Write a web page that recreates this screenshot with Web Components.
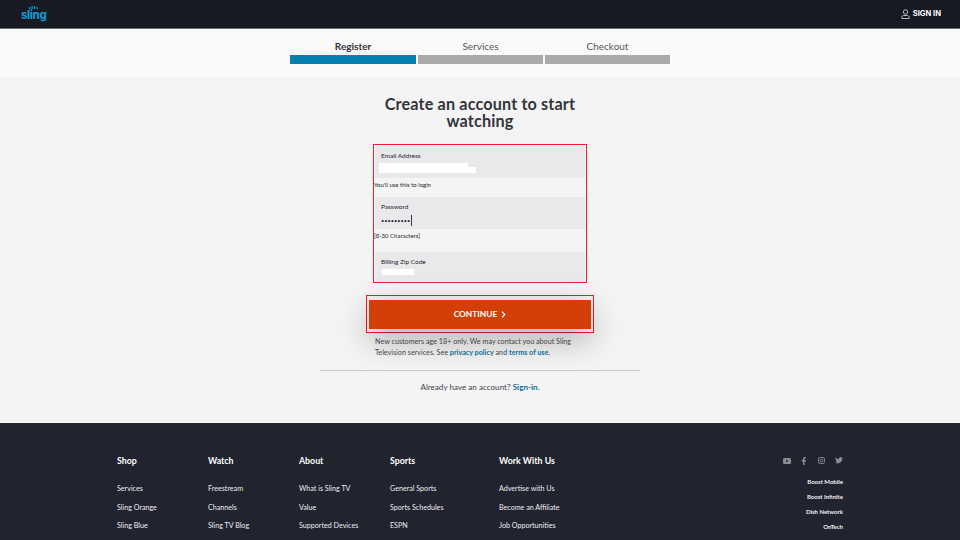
<!DOCTYPE html>
<html lang="en">
<head>
<meta charset="utf-8">
<title>Sling - Register</title>
<style>
  html, body { margin: 0; height: 540px; overflow: hidden; background: #f4f4f4; }
  body { font-family: "Lato", "Liberation Sans", sans-serif; color: #33343a; }
</style>
</head>
<body>
<sling-header></sling-header>
<sling-steps></sling-steps>
<sling-signup></sling-signup>
<sling-footer></sling-footer>

<script>
class SlingHeader extends HTMLElement {
  connectedCallback() {
    this.attachShadow({ mode: 'open' });
    this.shadowRoot.innerHTML = `
      <style>
        :host { display: flex; justify-content: space-between; align-items: center; box-sizing: border-box; height: 29px; padding: 0 19px 0 21px; background: #171923; border-bottom: 1px solid #6d6d75; }
        .logo { position: relative; font: 700 11.5px/12px "Inter", sans-serif; letter-spacing: -.35px; color: #0f9fdc; padding-top: 2px; }
        .logo svg { position: absolute; left: 8px; top: -1px; }
        .signin { display: flex; align-items: center; gap: 3px; font: 700 7.6px/10px "Inter", sans-serif; color: #fff; }
      </style>
      <div class="logo">
        <svg width="9" height="3" viewBox="0 0 9 3" fill="#0f9fdc"><rect x="0" y="1" width="1.2" height="2"/><rect x="2.5" y="0" width="1.2" height="3"/><rect x="5" y="0" width="1.2" height="3"/><rect x="7.5" y="1" width="1.2" height="2"/></svg>
        sling
      </div>
      <div class="signin">
        <svg width="9" height="10" viewBox="0 0 9 10" fill="none" stroke="#b8b8bc" stroke-width="1"><circle cx="4.5" cy="3" r="2.2"/><path d="M.8 9.5V8.2c0-1 .9-1.7 2-1.7h3.4c1.1 0 2 .7 2 1.7v1.3z"/></svg>
        <span>SIGN IN</span>
      </div>
    `;
  }
}

class SlingSteps extends HTMLElement {
  connectedCallback() {
    this.attachShadow({ mode: 'open' });
    const steps = [['Register', true, 126], ['Services', false, 125], ['Checkout', false, 125]];
    this.shadowRoot.innerHTML = `
      <style>
        :host { display: flex; justify-content: center; gap: 2px; box-sizing: border-box; height: 48px; padding-top: 11px; background: #fafafa; }
        .step { text-align: center; font-size: 10px; line-height: 13px; color: #55565c; }
        .step.on { color: #33343a; font-weight: 700; }
        .bar { height: 9px; margin-top: 2px; background: #aaaaaa; }
        .on .bar { background: #0480ae; }
      </style>
      ${steps.map(s => `<div class="step ${s[1] ? 'on' : ''}" style="width:${s[2]}px">${s[0]}<div class="bar"></div></div>`).join('')}
    `;
  }
}

class SlingField extends HTMLElement {
  connectedCallback() {
    this.attachShadow({ mode: 'open' });
    this.shadowRoot.innerHTML = `
      <style>
        :host { display: block; }
        .box { box-sizing: border-box; height: var(--h, 32px); padding: 6px 6px 0; background: #e9e9eb; }
        label { display: block; font-size: 6.5px; line-height: 8px; color: #26272c; }
        .val { display: block; margin-top: 3px; height: 12px; }
        .help { box-sizing: border-box; height: var(--help-h, 19px); padding-top: 3px; margin-left: -1px; font-size: 6px; line-height: 8px; color: #26272c; }
      </style>
      <div class="box">
        <label>${this.getAttribute('label')}</label>
        <div class="val"><slot></slot></div>
      </div>
      ${this.getAttribute('help') ? `<div class="help">${this.getAttribute('help')}</div>` : ''}
    `;
  }
}

class SlingSignup extends HTMLElement {
  connectedCallback() {
    this.attachShadow({ mode: 'open' });
    this.shadowRoot.innerHTML = `
      <style>
        :host { display: flex; flex-direction: column; align-items: center; box-sizing: border-box; height: 346px; padding-top: 18px; background: #f4f4f4; }
        h1 { margin: 0; width: 240px; text-align: center; font-size: 16.2px; line-height: 17px; font-weight: 700; color: #33343a; letter-spacing: .15px; }
        form { box-sizing: border-box; width: 214px; height: 139px; margin-top: 15px; padding: 1px; border: 1px solid #ed1c2e; }
        .redact { position: relative; display: block; width: 89px; height: 10px; margin-left: -2px; background: #fff; }
        .redact::after { content: ""; position: absolute; left: 89px; bottom: 0; width: 8px; height: 6px; background: #fff; }
        .dots { display: flex; align-items: center; height: 12px; font-size: 5.6px; color: #33343a; }
        .caret { width: 1px; height: 11px; margin-left: 1px; background: #33343a; }
        .zip { display: block; width: 32px; height: 6px; margin: 3px 0 0 1px; background: #fff; }
        .outline { box-sizing: border-box; width: 228px; height: 38px; margin-top: 12px; padding: 4px 2px 3px; border: 1px solid #ed1c2e; }
        button { display: flex; align-items: center; justify-content: center; gap: 4px; width: 100%; height: 100%; padding: 0 0 1px; border: 0; background: #d43f07; color: #fff; font: 700 8.4px/10px "Lato", sans-serif; box-shadow: 0 10px 32px rgba(0,0,0,.3); }
        .legal { box-sizing: border-box; width: 210px; margin-top: 4px; font-size: 7.2px; line-height: 10.5px; color: #44454b; }
        .legal div { white-space: nowrap; }
        a { color: #0f6f96; font-weight: 700; text-decoration: none; }
        hr { width: 320px; height: 1px; margin: 12px 0 0; border: 0; background: #c9c9c9; }
        .have { margin-top: 11px; font-size: 8.1px; line-height: 10px; color: #44454b; }
      </style>
      <h1>Create an account to start watching</h1>
      <form>
        <sling-field label="Email Address" help="You'll use this to login"><span class="redact"></span></sling-field>
        <sling-field label="Password" help="[8-30 Characters]" style="--help-h:23px"><span class="dots">•••••••••<span class="caret"></span></span></sling-field>
        <sling-field label="Billing Zip Code" style="--h:30px"><span class="zip"></span></sling-field>
      </form>
      <div class="outline">
        <button type="button">CONTINUE
          <svg width="5" height="7" viewBox="0 0 5 7" fill="none" stroke="#fff" stroke-width="1.2"><path d="M1 .7 3.8 3.5 1 6.3"/></svg>
        </button>
      </div>
      <div class="legal">
        <div>New customers age 18+ only. We may contact you about Sling</div>
        <div>Television services. See <a href="#">privacy policy</a> and <a href="#">terms of use.</a></div>
      </div>
      <hr>
      <div class="have">Already have an account? <a href="#">Sign-in.</a></div>
    `;
  }
}

class SlingFooter extends HTMLElement {
  connectedCallback() {
    this.attachShadow({ mode: 'open' });
    const cols = [
      ['Shop', 91, ['Services', 'Sling Orange', 'Sling Blue']],
      ['Watch', 91, ['Freestream', 'Channels', 'Sling TV Blog']],
      ['About', 91, ['What is Sling TV', 'Value', 'Supported Devices']],
      ['Sports', 109, ['General Sports', 'Sports Schedules', 'ESPN']],
      ['Work With Us', 100, ['Advertise with Us', 'Become an Affiliate', 'Job Opportunities']]
    ];
    this.shadowRoot.innerHTML = `
      <style>
        :host { display: flex; justify-content: space-between; box-sizing: border-box; height: 117px; padding: 32px 117px 0; background: #21232f; color: #fff; overflow: hidden; }
        .cols { display: flex; }
        h4 { margin: 0 0 18px; font-size: 8.8px; line-height: 11px; font-weight: 700; }
        ul { margin: 0; padding: 0; list-style: none; display: flex; flex-direction: column; gap: 9.5px; }
        li { font-size: 7.15px; line-height: 9px; color: #eeeef2; white-space: nowrap; }
        .right { display: flex; flex-direction: column; align-items: flex-end; }
        .social { display: flex; gap: 10.3px; align-items: center; height: 11px; margin-bottom: 11px; }
        .right ul { gap: 6px; align-items: flex-end; }
        .right li { font-size: 6px; font-weight: 700; }
      </style>
      <div class="cols">
        ${cols.map(c => `<div style="width:${c[1]}px"><h4>${c[0]}</h4><ul>${c[2].map(l => `<li>${l}</li>`).join('')}</ul></div>`).join('')}
      </div>
      <div class="right">
        <div class="social">
          <svg width="8" height="6" viewBox="0 0 8 6"><rect width="8" height="6" rx="1.5" fill="#8c8d93"/><path d="M3.2 1.6 5.4 3 3.2 4.4z" fill="#21232f"/></svg>
          <svg width="6" height="8" viewBox="0 0 6 8" fill="#8c8d93"><path d="M2 8V4.4H.8V3H2V2C2 .8 2.8 0 3.9 0h1.2v1.3h-.8c-.5 0-.8.3-.8.8V3h1.5l-.2 1.4H3.500V8z"/></svg>
          <svg width="7" height="7" viewBox="0 0 7 7" fill="none" stroke="#8c8d93" stroke-width=".9"><rect x=".5" y=".5" width="6" height="6" rx="1.6"/><circle cx="3.500" cy="3.500" r="1.300"/></svg>
          <svg width="8" height="7" viewBox="0 0 8 7" fill="#8c8d93"><path d="M8 1c-.3.1-.6.2-.9.2.3-.2.6-.5.7-.9-.3.2-.7.3-1 .4C6.500.3 6.100 0 5.500 0 4.600 0 3.900.8 3.900 1.700c0 .1 0 .3.100.4C2.700 2 1.500 1.400.600.300.400.600.400.900.400 1.100c0 .6.300 1.100.7 1.400-.3 0-.5-.1-.7-.2 0 .8.600 1.500 1.300 1.700-.2 0-.5.100-.7 0 .2.700.8 1.100 1.500 1.100C1.900 5.600 1 5.900 0 5.800 .7 6.300 1.600 6.500 2.500 6.500c3 0 4.700-2.500 4.700-4.700v-.2c.3-.2.600-.400.800-.600z"/></svg>
        </div>
        <ul>
          <li>Boost Mobile</li>
          <li>Boost Infinite</li>
          <li>Dish Network</li>
          <li>OnTech</li>
        </ul>
      </div>
    `;
  }
}

customElements.define('sling-header', SlingHeader);
customElements.define('sling-steps', SlingSteps);
customElements.define('sling-field', SlingField);
customElements.define('sling-signup', SlingSignup);
customElements.define('sling-footer', SlingFooter);
</script>
</body>
</html>
